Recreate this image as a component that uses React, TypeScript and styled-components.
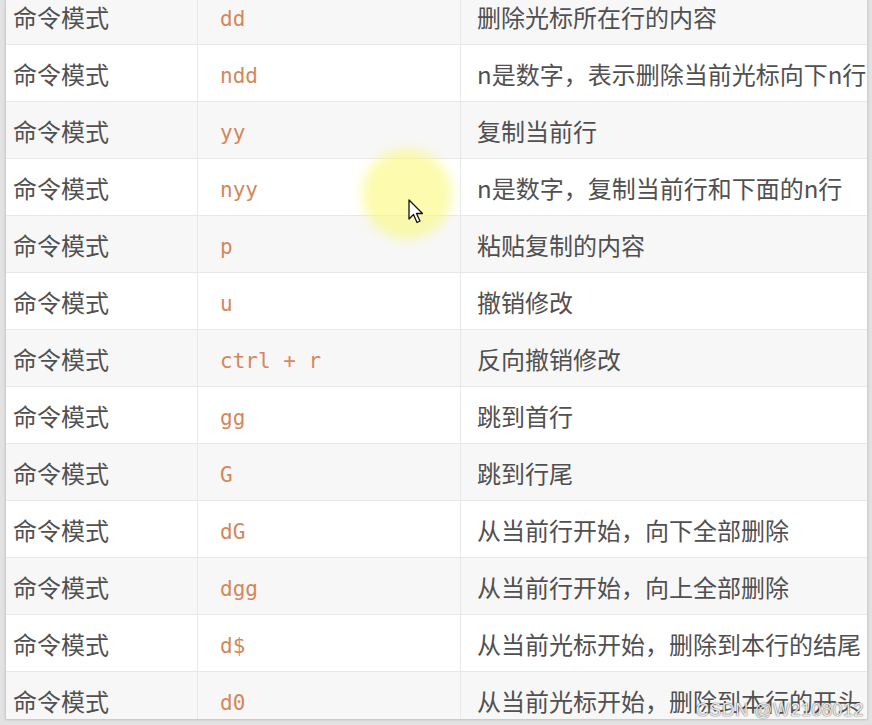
import React from "react";
import styled, { createGlobalStyle } from "styled-components";

const GlobalStyle = createGlobalStyle`
	html, body {
		margin: 0;
		padding: 0;
		background: #e4e4e4;
		overflow: hidden;
	}
	#root {
		width: 872px;
		height: 725px;
	}
`;

const Screen = styled.div`
	position: relative;
	width: 872px;
	height: 725px;
	background: #e2e2e2;
	display: flex;
	padding: 0 4px 6px 5px;
	box-sizing: border-box;
`;

const Frame = styled.div`
	flex: 1;
	overflow: hidden;
	background: #fff;
	border-left: 1px solid #cfcfcf;
	border-right: 1px solid #d2d2d2;
	box-shadow: 0 1px 2px rgba(0, 0, 0, 0.15);
`;

const Table = styled.div`
	margin-top: -12px;
	display: flex;
	flex-direction: column;
	width: 1000px;
`;

const Row = styled.div<{ $striped: boolean }>`
	display: grid;
	grid-template-columns: 192px 263px 1fr;
	height: 57px;
	box-sizing: border-box;
	border-bottom: 1px solid #e8e8e8;
	background: ${(p) => (p.$striped ? "#f7f7f7" : "#ffffff")};
`;

const Cell = styled.div<{ $pad: number }>`
	display: flex;
	align-items: center;
	padding-left: ${(p) => p.$pad}px;
	border-right: 1px solid #e8e8e8;
	font-family: "Noto Sans CJK SC", "Noto Sans", sans-serif;
	font-size: 24px;
	color: #505050;
	white-space: nowrap;
	overflow: hidden;
	&:last-child {
		border-right: none;
	}
`;

const Code = styled.span`
	padding-top: 5px;
	font-family: "DejaVu Sans Mono", "Liberation Mono", monospace;
	font-size: 21px;
	color: #d4875a;
	white-space: pre;
`;

const Highlight = styled.div`
	position: absolute;
	left: 362px;
	top: 149px;
	width: 90px;
	height: 90px;
	border-radius: 50%;
	background: rgba(250, 248, 120, 0.6);
	filter: blur(6px);
	pointer-events: none;
`;

const Pointer = styled.svg`
	position: absolute;
	left: 408px;
	top: 199px;
	width: 16px;
	height: 26px;
`;

const Watermark = styled.div`
	position: absolute;
	right: 8px;
	bottom: 4px;
	font-family: "Liberation Sans", Arial, sans-serif;
	font-size: 18px;
	color: rgba(255, 255, 255, 0.9);
	text-shadow: 0 0 1px rgba(0, 0, 0, 0.7), 0 0 2px rgba(0, 0, 0, 0.3);
	letter-spacing: 0.5px;
`;

const rows: [string, string][] = [
	["dd", "删除光标所在行的内容"],
	["ndd", "n是数字，表示删除当前光标向下n行"],
	["yy", "复制当前行"],
	["nyy", "n是数字，复制当前行和下面的n行"],
	["p", "粘贴复制的内容"],
	["u", "撤销修改"],
	["ctrl + r", "反向撤销修改"],
	["gg", "跳到首行"],
	["G", "跳到行尾"],
	["dG", "从当前行开始，向下全部删除"],
	["dgg", "从当前行开始，向上全部删除"],
	["d$", "从当前光标开始，删除到本行的结尾"],
	["d0", "从当前光标开始，删除到本行的开头"],
];

const App = () => {
	return (
		<>
			<GlobalStyle />
			<Screen>
				<Frame>
					<Table>
						{rows.map(([cmd, desc], i) => (
							<Row key={cmd} $striped={i % 2 === 0}>
								<Cell $pad={7}>命令模式</Cell>
								<Cell $pad={22}>
									<Code>{cmd}</Code>
								</Cell>
								<Cell $pad={16}>{desc}</Cell>
							</Row>
						))}
					</Table>
				</Frame>
				<Highlight />
				<Pointer viewBox="0 0 16 26">
					<path
						d="M1 1 L1 20 L5.5 15.5 L9 23.5 L12 22 L8.5 14.5 L14.5 14.5 Z"
						fill="#fff"
						stroke="#111"
						strokeWidth="1.3"
						strokeLinejoin="round"
					/>
				</Pointer>
				<Watermark>CSDN @W2108012</Watermark>
			</Screen>
		</>
	);
};

export default App;
